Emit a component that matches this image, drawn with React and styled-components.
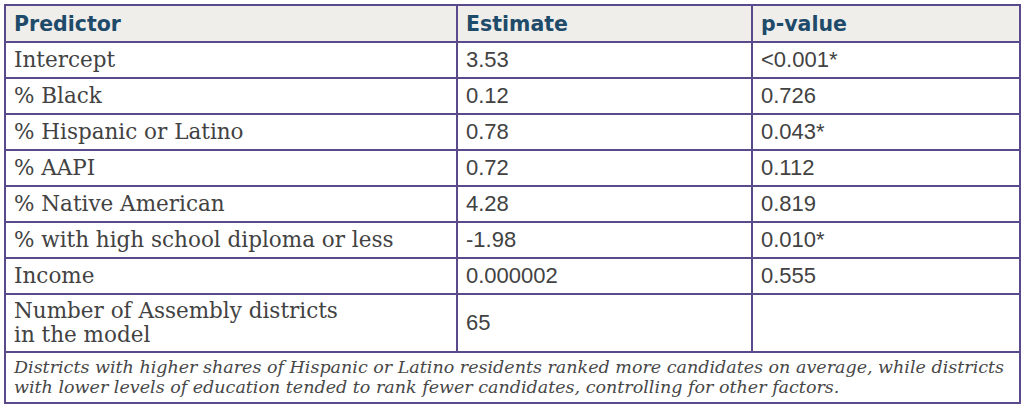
import React from "react";
import styled, { createGlobalStyle } from "styled-components";

const Global = createGlobalStyle`
  html, body { margin: 0; padding: 0; background: #ffffff; }
  body { width: 1024px; height: 408px; overflow: hidden; }
`;

const Wrap = styled.div`
  padding: 4px 5px 0 4px;
`;

const Table = styled.table`
  width: 1015px;
  border-collapse: collapse;
  table-layout: fixed;
  border: 2px solid #5b4a8b;
`;

const Col = styled.col`
  width: ${(p) => p.$w}px;
`;

const HeadCell = styled.th`
  background: #efeeea;
  color: #1f4b6b;
  font-family: "DejaVu Sans", sans-serif;
  font-weight: 700;
  font-size: 20.5px;
  text-align: left;
  padding: 0 8px;
  height: 35px;
  border: 2px solid #5b4a8b;
`;

const Cell = styled.td`
  color: #424242;
  font-family: ${(p) => (p.$serif ? '"DejaVu Serif", serif' : '"Liberation Sans", Arial, sans-serif')};
  font-size: ${(p) => (p.$serif ? "21.5px" : "22px")};
  font-weight: 400;
  line-height: ${(p) => (p.$tall ? "24px" : "22px")};
  padding: 0 8px;
  height: ${(p) => (p.$tall ? "56px" : "34px")};
  border: 2px solid #5b4a8b;
  vertical-align: middle;
`;

const Note = styled.td`
  color: #474747;
  font-family: "DejaVu Serif", serif;
  font-style: italic;
  font-size: 17.5px;
  line-height: 20px;
  padding: 4px 8px 5px;
  border: 2px solid #5b4a8b;
`;

const rows = [
  ["Intercept", "3.53", "<0.001*"],
  ["% Black", "0.12", "0.726"],
  ["% Hispanic or Latino", "0.78", "0.043*"],
  ["% AAPI", "0.72", "0.112"],
  ["% Native American", "4.28", "0.819"],
  ["% with high school diploma or less", "-1.98", "0.010*"],
  ["Income", "0.000002", "0.555"],
];

export default function App() {
  return (
    <>
      <Global />
      <Wrap>
        <Table>
          <colgroup>
            <Col $w={452} />
            <Col $w={295} />
            <Col $w={268} />
          </colgroup>
          <thead>
            <tr>
              <HeadCell>Predictor</HeadCell>
              <HeadCell>Estimate</HeadCell>
              <HeadCell>p-value</HeadCell>
            </tr>
          </thead>
          <tbody>
            {rows.map((r) => (
              <tr key={r[0]}>
                <Cell $serif>{r[0]}</Cell>
                <Cell>{r[1]}</Cell>
                <Cell>{r[2]}</Cell>
              </tr>
            ))}
            <tr>
              <Cell $serif $tall>
                Number of Assembly districts
                <br />
                in the model
              </Cell>
              <Cell $tall>65</Cell>
              <Cell $tall />
            </tr>
            <tr>
              <Note colSpan={3}>
                Districts with higher shares of Hispanic or Latino residents ranked more candidates on average, while districts
                with lower levels of education tended to rank fewer candidates, controlling for other factors.
              </Note>
            </tr>
          </tbody>
        </Table>
      </Wrap>
    </>
  );
}
